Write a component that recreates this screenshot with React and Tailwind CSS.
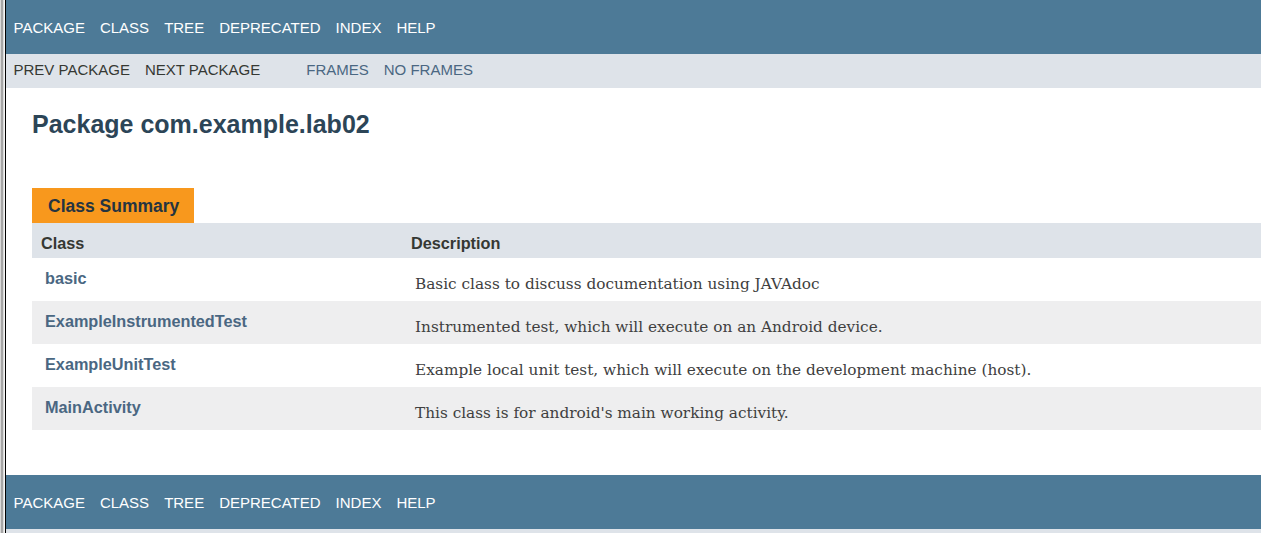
const topLinks = ['Package', 'Class', 'Tree', 'Deprecated', 'Index', 'Help'];

const classes = [
  { name: 'basic', desc: 'Basic class to discuss documentation using JAVAdoc' },
  { name: 'ExampleInstrumentedTest', desc: 'Instrumented test, which will execute on an Android device.' },
  { name: 'ExampleUnitTest', desc: 'Example local unit test, which will execute on the development machine (host).' },
  { name: 'MainActivity', desc: "This class is for android's main working activity." },
];

const sans = "font-['Liberation_Sans',Arial,sans-serif]";

const TopNav = () => (
  <div className="h-[54px] shrink-0 bg-[#4d7a97] pt-[18.75px]">
    <ul className="flex text-[15px] leading-[18px] text-white uppercase">
      {topLinks.map((l) => (
        <li key={l} className="px-[7.5px]">{l}</li>
      ))}
    </ul>
  </div>
);

const SubNav = () => (
  <div className="h-[34px] shrink-0 bg-[#dee3e9] pt-[6.75px]">
    <div className="flex text-[15px] leading-[18px] uppercase">
      <ul className="flex text-[#353833] mr-[31px]">
        <li className="px-[7.5px]">Prev Package</li>
        <li className="px-[7.5px]">Next Package</li>
      </ul>
      <ul className="flex text-[#4a6782]">
        <li className="px-[7.5px]">Frames</li>
        <li className="px-[7.5px]">No Frames</li>
      </ul>
    </div>
  </div>
);

export default function App() {
  return (
    <div className={`flex w-[1261px] h-[533px] overflow-hidden bg-white text-[#353833] ${sans}`}>
      {/* window frame edge */}
      <div className="w-px shrink-0 bg-[#d9d9d9]" />
      <div className="w-[2px] shrink-0 bg-[#a6a6a6]" />
      <div className="w-px shrink-0 bg-[#dcdcdc]" />
      <div className="w-px shrink-0 bg-[#f4f4f4]" />
      <div className="w-px shrink-0 bg-black" />

      <div className="flex-1 min-w-0 flex flex-col">
        <TopNav />
        <SubNav />

        <div className="pl-[26px]">
          <h1 className="mt-[22px] text-[25px] leading-[29px] font-bold text-[#2c4557]">
            Package com.example.lab02
          </h1>

          <div className="mt-[49px]">
            <div className="h-[35px] inline-block bg-[#f8981d] pl-[16px] pr-[15px] pt-[8px] text-[17.5px] leading-[20px] font-bold text-[#253441]">
              Class Summary
            </div>
          </div>

          <div className="flex h-[35px] bg-[#dee3e9] text-[16.25px] font-bold text-[#353833] leading-[19px]">
            <div className="w-[370px] shrink-0 pl-[9px] pt-[11px]">Class</div>
            <div className="flex-1 pl-[9px] pt-[11px]">Description</div>
          </div>

          {classes.map((c, i) => (
            <div
              key={c.name}
              className={`flex h-[43px] ${i % 2 === 1 ? 'bg-[#eeeeef]' : 'bg-white'}`}
            >
              <div className="w-[370px] shrink-0 pl-[13px] pt-[11px] text-[16.25px] leading-[19px] font-bold text-[#4a6782]">
                {c.name}
              </div>
              <div className="flex-1 pl-[13px] pt-[16px] text-[15.3px] leading-[20px] text-[#404040] whitespace-nowrap font-['DejaVu_Serif',Georgia,serif]">
                {c.desc}
              </div>
            </div>
          ))}
        </div>

        <div className="h-[45px] shrink-0" />
        <TopNav />
        <SubNav />
      </div>
    </div>
  );
}
